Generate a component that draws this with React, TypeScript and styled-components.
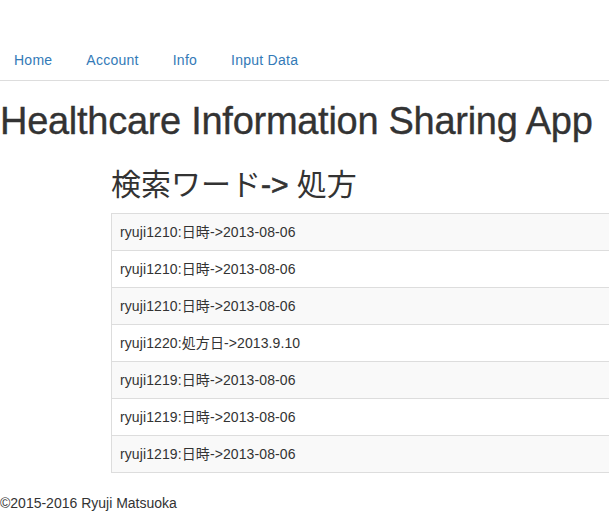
import React from "react";
import styled, { createGlobalStyle } from "styled-components";

const Global = createGlobalStyle`
  html, body { margin: 0; padding: 0; background: #fff; }
  body {
    font-family: "Liberation Sans", Arial, "Noto Sans CJK JP", sans-serif;
    font-size: 14px;
    line-height: 20px;
    color: #333;
    overflow-x: hidden;
  }
`;

const Page = styled.div`
  padding-top: 40px;
  width: 609px;
  overflow: hidden;
`;

const NavTabs = styled.ul`
  display: flex;
  list-style: none;
  margin: 0;
  padding: 0;
  border-bottom: 1px solid #ddd;
`;

const NavItem = styled.li`
  margin-right: 2px;
`;

const NavLink = styled.a`
  display: block;
  padding: 10px 15px 10px 14px;
  line-height: 20px;
  color: #337ab7;
  text-decoration: none;
  letter-spacing: 0.25px;
  margin-right: 3px;
`;

const Title = styled.h1`
  font-size: 38px;
  font-weight: 400;
  line-height: 40px;
  margin: 20px 0 10px;
  white-space: nowrap;
  letter-spacing: -0.28px;
  -webkit-text-stroke: 0.35px #333;
`;

const Section = styled.div`
  margin-left: 111px;
`;

const Subtitle = styled.h2`
  font-family: "Liberation Sans", "Noto Sans CJK JP", sans-serif;
  font-size: 30px;
  font-weight: 400;
  line-height: 33px;
  margin: 27px 0 12px;
  white-space: nowrap;
`;

const Arrow = styled.span`
  -webkit-text-stroke: 0.7px #333;
`;

const Table = styled.table`
  width: 700px;
  border-collapse: collapse;
  border-spacing: 0;
  margin-bottom: 20px;
`;

const Row = styled.tr<{ $striped: boolean }>`
  background: ${(p) => (p.$striped ? "#f9f9f9" : "#fff")};
`;

const Cell = styled.td`
  padding: 8px;
  line-height: 20px;
  border: 1px solid #ddd;
  white-space: nowrap;
  letter-spacing: 0.1px;
`;

const Footer = styled.footer`
  line-height: 20px;
  white-space: nowrap;
`;

const rows = [
  "ryuji1210:日時->2013-08-06",
  "ryuji1210:日時->2013-08-06",
  "ryuji1210:日時->2013-08-06",
  "ryuji1220:処方日->2013.9.10",
  "ryuji1219:日時->2013-08-06",
  "ryuji1219:日時->2013-08-06",
  "ryuji1219:日時->2013-08-06",
];

export default function App() {
  return (
    <Page>
      <Global />
      <NavTabs>
        {["Home", "Account", "Info", "Input Data"].map((t) => (
          <NavItem key={t}>
            <NavLink href="#">{t}</NavLink>
          </NavItem>
        ))}
      </NavTabs>
      <Title>Healthcare Information Sharing App</Title>
      <Section>
        <Subtitle>
          検索ワード<Arrow>-&gt;</Arrow> 処方
        </Subtitle>
        <Table>
          <tbody>
            {rows.map((r, i) => (
              <Row key={i} $striped={i % 2 === 0}>
                <Cell>{r}</Cell>
              </Row>
            ))}
          </tbody>
        </Table>
      </Section>
      <Footer>©2015-2016 Ryuji Matsuoka</Footer>
    </Page>
  );
}
